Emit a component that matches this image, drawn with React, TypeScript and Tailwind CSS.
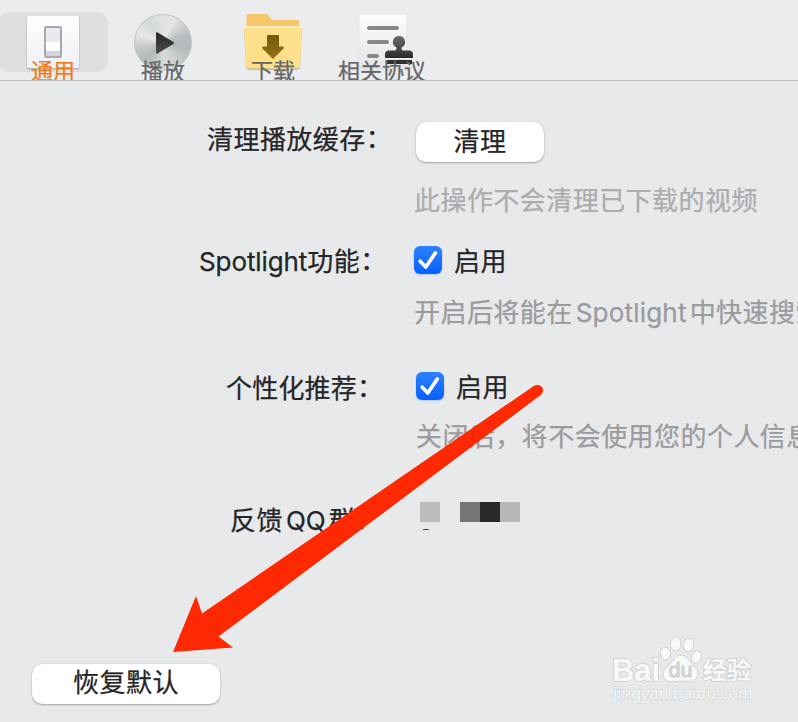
import { useState, type ReactNode } from 'react'
import clsx from 'clsx'

const tabs = [
  { id: 'general', label: '通用', icon: <GeneralIcon /> },
  { id: 'playback', label: '播放', icon: <PlaybackIcon /> },
  { id: 'download', label: '下载', icon: <DownloadIcon /> },
  { id: 'terms', label: '相关协议', icon: <TermsIcon /> },
]

function GeneralIcon() {
  return (
    <svg width="60" height="64" viewBox="0 0 60 64">
      <defs>
        <linearGradient id="plate" x1="0" y1="0" x2="0" y2="1">
          <stop offset="0" stopColor="#ffffff" />
          <stop offset="1" stopColor="#efeff6" />
        </linearGradient>
      </defs>
      <rect x="3.500" y="4" width="53" height="53.500" rx="2" fill="#b7b8bc" />
      <rect x="4" y="4" width="52" height="52" rx="1.500" fill="url(#plate)" />
      <rect x="22" y="15" width="16" height="30" rx="1" fill="#e9e9ef" stroke="#a9a9ad" strokeWidth="2" />
      <rect x="23" y="30" width="14" height="9" fill="#ffffff" />
      <rect x="23" y="39" width="14" height="5" fill="#d3d3e0" />
    </svg>
  )
}

function PlaybackIcon() {
  return (
    <div className="relative mt-[2px] h-[57px] w-[58px] rounded-full border border-[#bfc2c3] bg-[conic-gradient(#e0e3e3,#e3e5e6_25deg,#b5bcbd_75deg,#b3babb_105deg,#cfd3d3_150deg,#d6d9d9_180deg,#b4baba_225deg,#c2c7c8_255deg,#e6e8e8_290deg,#d5d8d9_325deg,#e0e3e3)]">
      <svg className="absolute inset-0" width="56" height="56" viewBox="0 0 56 56">
        <defs>
          <linearGradient id="play" x1="0" y1="0" x2="0" y2="1">
            <stop offset="0" stopColor="#262626" />
            <stop offset="1" stopColor="#4b4b4b" />
          </linearGradient>
        </defs>
        <path d="M21.800 18 L38.300 28 L21.800 38 Z" fill="url(#play)" stroke="url(#play)" strokeWidth="1.500" strokeLinejoin="round" />
      </svg>
    </div>
  )
}

function DownloadIcon() {
  return (
    <svg width="60" height="64" viewBox="0 0 60 64">
      <defs>
        <linearGradient id="arrow" x1="0" y1="0" x2="0" y2="1">
          <stop offset="0" stopColor="#735708" />
          <stop offset="1" stopColor="#957516" />
        </linearGradient>
      </defs>
      <path d="M3.500 16 V4 Q3.500 2 5.500 2 H23 Q24.500 2 25.300 3 L29 8 H55 Q56.500 8 56.500 9.500 V16 Z" fill="#f8c76b" />
      <path d="M1 15 H59 L57 55 Q56.500 57.700 54 57.700 H6 Q3.500 57.700 3 55 Z" fill="#b9b09b" />
      <path d="M1 14.500 H59 L57 54.500 Q56.700 56.500 54.500 56.500 H5.500 Q3.300 56.500 3 54.500 Z" fill="#ffe08a" />
      <path d="M1 15 H59" stroke="#fff6d8" strokeWidth="1.500" />
      <path d="M25 23 H35 Q36 23 36 24 V34.500 H40 Q41.500 35 40.500 36.500 L30 47 L19.500 36.500 Q18.500 35 20 34.500 H24 V24 Q24 23 25 23 Z" fill="url(#arrow)" />
    </svg>
  )
}

function TermsIcon() {
  return (
    <svg className="overflow-visible" width="60" height="64" viewBox="0 0 60 64">
      <defs>
        <linearGradient id="paper" x1="0" y1="0" x2="0" y2="1">
          <stop offset="0" stopColor="#fdfdfd" />
          <stop offset="1" stopColor="#e3e4e6" />
        </linearGradient>
        <linearGradient id="stamp" x1="0" y1="0" x2="0" y2="1">
          <stop offset="0" stopColor="#6c6c6f" />
          <stop offset="1" stopColor="#29292e" />
        </linearGradient>
      </defs>
      <rect x="7" y="2" width="48" height="56" rx="2" fill="url(#paper)" stroke="#dfe0e2" strokeWidth=".6" />
      <g stroke="#88888a" strokeWidth="4" strokeLinecap="round">
        <path d="M17 16 H45" />
        <path d="M17 30 H35" />
        <path d="M17 44 H25" />
      </g>
      <path d="M47 24 A6 6 0 0 1 49.500 35.500 V37 Q49.500 38.500 52 38.500 H57 Q61 38.500 61 42.500 V46 H33 V42.500 Q33 38.500 37 38.500 H42 Q44.500 38.500 44.500 37 V35.500 A6 6 0 0 1 47 24 Z" fill="url(#stamp)" />
      <rect x="34" y="48" width="26" height="4" fill="#303034" />
    </svg>
  )
}

function Button({ className, children }: { className?: string; children: ReactNode }) {
  return (
    <button
      className={clsx(
        'h-10 rounded-[10px] bg-white pb-px text-center leading-none shadow-[0_1px_2px_rgba(0,0,0,0.28),0_0_1px_rgba(0,0,0,0.25)]',
        className
      )}
    >
      {children}
    </button>
  )
}

function Colon() {
  return <span className="relative -top-px">：</span>
}

function Checkbox({ label }: { label: string }) {
  const [checked, setChecked] = useState(true)

  return (
    <button className="flex items-center gap-[12px]" onClick={() => setChecked(!checked)}>
      <span
        className={clsx(
          'h-7 w-7 rounded-[6px] shadow-[0_1px_2px_rgba(0,90,255,0.25)]',
          checked ? 'bg-linear-to-b from-[#2c80ff] to-[#0560fd]' : 'bg-white'
        )}
      >
        {checked && (
          <svg width="28" height="28" viewBox="0 0 28 28">
            <path d="M6.200 15.300 L11.800 21 L21.300 7" fill="none" stroke="#fff" strokeWidth="3.700" strokeLinecap="round" strokeLinejoin="round" />
          </svg>
        )}
      </span>
      <span className="pt-[3px]">{label}</span>
    </button>
  )
}

function Watermark() {
  return (
    <svg className="absolute left-[600px] top-[630px] tracking-normal" width="170" height="84" viewBox="0 0 170 84">
      <g fill="#f8f9f9" stroke="#cfd1d3" strokeWidth="1">
        <ellipse cx="65.500" cy="23.500" rx="5" ry="6.500" transform="rotate(-12 65.500 23.500)" />
        <ellipse cx="75.700" cy="14" rx="5.200" ry="7" />
        <ellipse cx="88.500" cy="15" rx="5.200" ry="6.700" transform="rotate(10 88.500 15)" />
        <ellipse cx="96.500" cy="27" rx="5" ry="6.300" transform="rotate(15 96.500 27)" />
        <path d="M81 25 C87 25 89 31 93 35 C98 39 99 43 97 47 C95 52 90 52 81 51 C72 52 67 53 64 48 C62 43 64 39 68 36 C73 32 75 25 81 25 Z" />
      </g>
      <g fill="#f8f9f9" stroke="#cfd1d3" strokeWidth="1.800" strokeLinejoin="round" paintOrder="stroke" fontWeight="700">
        <text x="12" y="50.500" fontSize="32" textLength="48" lengthAdjust="spacingAndGlyphs" className="font-['Liberation_Sans',sans-serif]">Bai</text>
        <text x="103" y="48.500" fontSize="24" textLength="48" lengthAdjust="spacingAndGlyphs" className="font-['Noto_Sans_CJK_SC',sans-serif]">经验</text>
      </g>
      <text x="68.500" y="46.500" fontSize="20" fontWeight="400" fill="#dfe1e2" stroke="#cccfd1" strokeWidth="1" textLength="24" lengthAdjust="spacingAndGlyphs" className="font-['Liberation_Sans',sans-serif]">du</text>
      <text x="13" y="69" fontSize="16" fill="#f7f8f8" stroke="#d5d7d9" strokeWidth="1.400" paintOrder="stroke" textLength="140" lengthAdjust="spacing" className="font-['Noto_Sans',sans-serif]">jingyan.baidu.com</text>
    </svg>
  )
}

export default function App() {
  const [activeTab, setActiveTab] = useState('general')

  return (
    <div className="relative h-[722px] w-[798px] overflow-hidden bg-[#e8e9eb] font-[Inter,'Noto_Sans_CJK_SC',sans-serif] text-[26px] tracking-[0.450px] text-[#252527] [-webkit-text-stroke:0.25px]">
      {/* Toolbar */}
      <header className="flex h-[81px] overflow-hidden border-b border-[#bfc0c2] bg-[#ebecee] pt-3">
        {tabs.map((tab) => (
          <button
            key={tab.id}
            onClick={() => setActiveTab(tab.id)}
            className={clsx(
              'flex h-[60px] shrink-0 flex-col items-center text-[22px] tracking-normal',
              tab.id === 'terms' ? 'w-[108px]' : 'w-[110px]',
              activeTab === tab.id ? 'rounded-xl bg-[#dddee0] -ml-[2px] text-[#f17b12]' : 'text-[#666668]'
            )}
          >
            <span className="flex h-[60px] shrink-0 justify-center">{tab.icon}</span>
            <span className="relative -mt-[13px] whitespace-nowrap leading-[24px]">{tab.label}</span>
          </button>
        ))}
      </header>

      {/* Settings */}
      <main className="whitespace-nowrap leading-[38px]">
        <div className="mt-[41px] flex h-10">
          <div className="w-[416px] -mt-px pl-[207px]">清理播放缓存<Colon /></div>
          <Button className="w-32">清理</Button>
        </div>
        <p className="mt-5 pl-[414px] text-[#acacae]">此操作不会清理已下载的视频</p>

        <div className="mt-[21px] flex h-[38px] items-center">
          <div className="w-[414px] pl-[199px] pt-[3px]">
            <span className="tracking-[-0.100px]">Spotlight</span>功能<Colon />
          </div>
          <Checkbox label="启用" />
        </div>
        <p className="mt-[15px] pl-[414px] text-[#9b9b9d]">
          开启后将能在<span className="mx-[3px] tracking-[0.200px]">Spotlight</span>中快速搜索
        </p>

        <div className="mt-[35px] flex h-[38px] items-center">
          <div className="w-[416px] pl-[226px] pt-[5px] tracking-[0.200px]">个性化推荐<Colon /></div>
          <Checkbox label="启用" />
        </div>
        <p className="mt-[13px] pl-[416px] text-[#9b9b9d]">关闭后，将不会使用您的个人信息</p>

        <div className="mt-[46px] flex h-[38px]">
          <div className="w-[420px] pl-[230px]">
            反馈<span className="mx-[3px] tracking-normal">QQ</span>群<Colon />
          </div>
          <div>
            <div className="flex h-5">
              <span className="w-5 bg-[#bbbcbe]" />
              <span className="ml-5 w-5 bg-[#747578]" />
              <span className="w-5 bg-[#29292a]" />
              <span className="w-5 bg-[#b7b8ba]" />
            </div>
            <svg width="14" height="12" viewBox="0 0 14 12">
              <path d="M2 7 H10 Q6 9 2 7" fill="#252527" />
            </svg>
          </div>
        </div>
      </main>

      <footer className="mt-[123px] pl-8">
        <Button className="w-[188px]">恢复默认</Button>
      </footer>

      <Watermark />

      {/* Pointer arrow */}
      <svg className="pointer-events-none absolute inset-0" width="798" height="722" viewBox="0 0 798 722">
        <path d="M534.500 385.500 Q540 383.500 542.500 388 Q544.500 392 540 395.500 L218.500 636.500 L233 647.500 L173 652 L196 596 L202 613.500 Z" fill="#ff2901" />
      </svg>
    </div>
  )
}
